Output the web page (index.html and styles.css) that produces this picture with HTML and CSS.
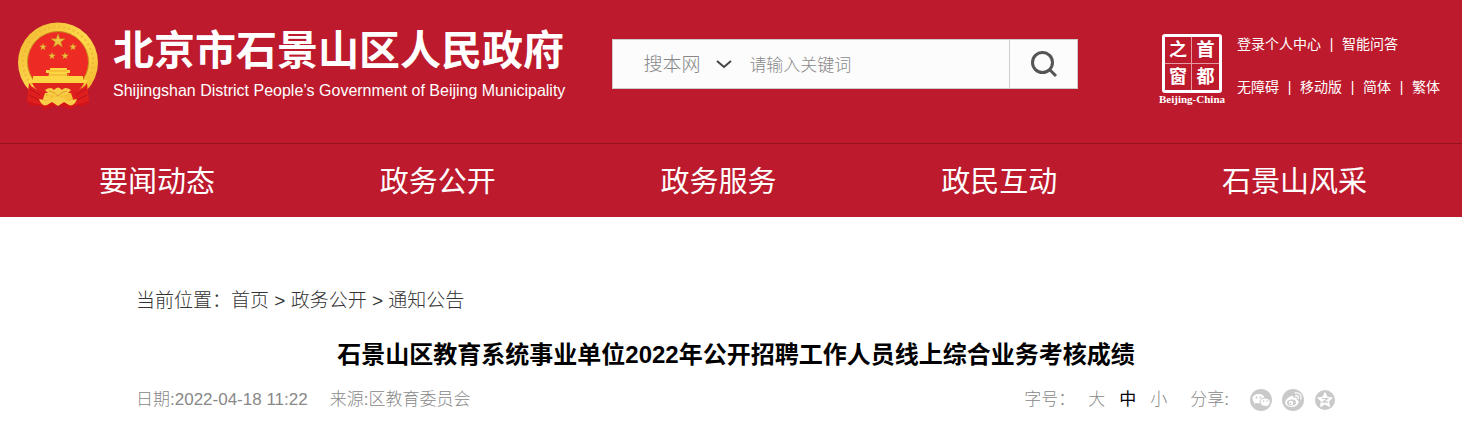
FILE: index.html
```html
<!DOCTYPE html>
<html lang="zh-CN">
  <head>
    <meta charset="utf-8" />
    <title>石景山区教育系统事业单位2022年公开招聘工作人员线上综合业务考核成绩</title>
    <meta name="viewport" content="width=device-width, initial-scale=1" />
    <link rel="stylesheet" href="styles.css">
  </head>
  <body>
    <header class="header">
      <div class="top">
        <a class="logo" href="#">
          <svg class="emblem" viewBox="0 0 82 88" aria-hidden="true">
            <defs>
              <linearGradient id="gold" x1="0" y1="0" x2="1" y2="1">
                <stop offset="0" stop-color="#eeb62c" />
                <stop offset=".5" stop-color="#ffd84e" />
                <stop offset="1" stop-color="#f0b127" />
              </linearGradient>
              <path id="star" d="M0-10 2.3-3.1H9.5L3.7 1.2 5.9 8.1 0 3.9-5.9 8.1-3.7 1.2-9.5-3.1H-2.3Z" />
            </defs>
            <path d="M12 60 10 80Q15 86 22 83L28 87 41 83 54 87 60 83Q67 86 72 80L70 60Z" fill="#d31519" />
            <circle cx="41" cy="40.500" r="40" fill="url(#gold)" />
            <circle cx="41" cy="40" r="35" fill="none" stroke="#eeb833" stroke-width="2" stroke-dasharray="2 3" />
            <circle cx="41" cy="40" r="30.500" fill="#ee2a24" stroke="#c9881c" />
            <g fill="#eec33d" stroke="#b9831c" stroke-width=".6">
              <use href="#star" transform="translate(41 19) scale(.75)" />
              <use href="#star" transform="translate(26 25) scale(.38)" />
              <use href="#star" transform="translate(56 25) scale(.38)" />
              <use href="#star" transform="translate(35 34) scale(.38)" />
              <use href="#star" transform="translate(48 34) scale(.38)" />
            </g>
            <path d="M33 46H50V48H53V51H50V54H66V58H71Q69 63 66 61H16Q13 62 11 58H16V54H32V51H29V48H33Z" fill="#ffd543" />
            <path d="M32 49H50M31 53H52" stroke="#e9ab2c" />
            <path d="M15 61H67Q64 68 57 71H25Q18 68 15 61Z" fill="#df241f" />
            <path d="M12 61Q14 66 28 71L24 83 10 79ZM70 61Q68 66 54 71L58 83 72 79Z" fill="#df1f1e" />
            <path d="M13 67 23 73M12 73 22 78M69 67 59 73M70 73 60 78" stroke="#b5131a" />
            <path d="M28 68Q34 64 37 68 41 63 45 68 48 64 54 68 49 74 44 72L41 75 38 72Q33 74 28 68ZM22 77 33 79Q38 74 41 75 45 74 49 79L60 77Q57 85 52 83L47 80 41 84 35 80 30 83Q25 85 22 77Z" fill="#f8ce49" />
            <path d="M32 69Q38 70 41 74 44 70 50 69" fill="none" stroke="#dd9c28" />
          </svg>
          <span class="logo-text">
            <span class="logo-cn">北京市石景山区人民政府</span>
            <span class="logo-en" lang="en">Shijingshan District People’s Government of Beijing Municipality</span>
          </span>
        </a>
        <form class="search" role="search">
          <div class="scope">
            <select aria-label="搜索范围">
              <option>搜本网</option>
            </select>
            <svg width="16" height="10" viewBox="0 0 16 10" aria-hidden="true">
              <path d="M1 2 8 8 15 2" />
            </svg>
          </div>
          <input type="text" placeholder="请输入关键词" aria-label="请输入关键词" />
          <button type="button" aria-label="搜索">
            <svg width="28" height="28" viewBox="0 0 28 28" aria-hidden="true">
              <circle cx="12.500" cy="12.500" r="10" />
              <path d="M19.500 19.500 26 26" />
            </svg>
          </button>
        </form>
        <div class="side">
          <a class="capital" href="#">
            <span class="seal">
              <span>之</span><span>首</span>
              <span>窗</span><span>都</span>
            </span>
            <span class="seal-en">Beijing-China</span>
          </a>
          <div class="links">
            <p><a href="#">登录个人中心</a><i>|</i><a href="#">智能问答</a></p>
            <p><a href="#">无障碍</a><i>|</i><a href="#">移动版</a><i>|</i><a href="#">简体</a><i>|</i><a href="#">繁体</a></p>
          </div>
        </div>
      </div>
      <nav class="nav">
        <a href="#">要闻动态</a>
        <a href="#">政务公开</a>
        <a href="#">政务服务</a>
        <a href="#">政民互动</a>
        <a href="#">石景山风采</a>
      </nav>
    </header>
    <main class="main">
      <div class="crumbs">当前位置：<a href="#">首页</a> &gt; <a href="#">政务公开</a> &gt; <a href="#">通知公告</a></div>
      <h1>石景山区教育系统事业单位2022年公开招聘工作人员线上综合业务考核成绩</h1>
      <div class="meta">
        <span class="date">日期:2022-04-18 11:22</span>
        <span>来源:区教育委员会</span>
        <div class="tools">
          <span>字号：</span>
          <div class="sizes">
            <button type="button">大</button>
            <button type="button" class="on">中</button>
            <button type="button">小</button>
          </div>
          <span>分享:</span>
          <div class="share">
            <a href="#" aria-label="微信">
              <svg viewBox="0 0 22 22">
                <circle cx="11" cy="11" r="11" fill="#c9c9c9" />
                <path d="M8.500 5C5 5 2.500 7 2.500 9.700c0 1.500.8 2.800 2 3.600l-.5 1.900 2.200-1.100 2.300.3c3.500 0 6-2 6-4.700S12 5 8.500 5Z" fill="#fff" />
                <path d="M15 9c-3 0-5 1.800-5 4.200s2.200 4.200 5 4.200l1.800-.2 2 1-.5-1.700c1.200-.8 1.900-1.900 1.900-3.300C20.200 10.800 18 9 15 9Z" fill="#fff" stroke="#c9c9c9" />
                <g fill="#c9c9c9"><circle cx="6.500" cy="8.500" r="1" /><circle cx="10.500" cy="8.500" r="1" /><circle cx="13.500" cy="12" r=".8" /><circle cx="17" cy="12" r=".8" /></g>
              </svg>
            </a>
            <a href="#" aria-label="微博">
              <svg viewBox="0 0 22 22">
                <circle cx="11" cy="11" r="11" fill="#c9c9c9" />
                <path d="M9 7c1.500-.6 2.800 0 2.300 1.900 2.500-.9 4.200 0 3.500 1.800 1.600.5 2.100 1.500 1.800 2.800-.5 2.600-3.500 4.500-7 4.500s-6.400-1.800-6.400-4.300C3.200 11.300 6.200 8 9 7Z" fill="#fff" />
                <ellipse cx="9.500" cy="13.700" rx="4.500" ry="3.200" fill="#c9c9c9" transform="rotate(-8 9.500 13.700)" />
                <circle cx="9" cy="14" r="2.300" fill="#fff" />
                <circle cx="8.500" cy="14.300" r=".9" fill="#c9c9c9" />
                <path d="M13.500 6.800c2-.3 3.200 1 2.700 2.900M13.300 4c3.900-.6 6.500 2.300 5.600 6" fill="none" stroke="#fff" stroke-width="1.300" stroke-linecap="round" />
              </svg>
            </a>
            <a href="#" aria-label="QQ空间">
              <svg viewBox="0 0 22 22">
                <circle cx="11" cy="11" r="10" fill="#c9c9c9" />
                <path d="m11 3.500 2.200 4.700 5.100.7-3.700 3.500.9 5.100L11 15l-4.500 2.500.9-5.100-3.700-3.500 5.100-.7Z" fill="#fff" stroke="#fff" stroke-linejoin="round" />
                <path d="M8 9.500h5.500L9 13.200h5" fill="none" stroke="#c9c9c9" stroke-width="1.200" />
              </svg>
            </a>
          </div>
        </div>
      </div>
    </main>
  </body>
</html>
```
FILE: styles.css
```css
* {
  box-sizing: border-box;
}
body {
  margin: 0;
  background: #fff;
  font-family: "Liberation Sans", "Noto Sans CJK SC", sans-serif;
  font-weight: 300;
}
a {
  color: inherit;
  text-decoration: none;
}
button,
input,
select {
  font: inherit;
  border: 0;
  padding: 0;
  background: none;
}
.header {
  background: #bd1a2d;
  color: #fff;
}
.top {
  display: flex;
  align-items: flex-start;
  padding: 22px 22px 0 17px;
  height: 143px;
}
.logo {
  display: flex;
  gap: 14px;
}
.emblem {
  width: 82px;
  height: 88px;
}
.logo-text {
  display: flex;
  flex-direction: column;
  white-space: nowrap;
}
.logo-cn {
  font-size: 41px;
  line-height: 58px;
  font-weight: 700;
}
.logo-en {
  font-size: 16px;
  line-height: 22px;
}
.search {
  display: flex;
  width: 466px;
  height: 50px;
  margin: 17px 0 0 47px;
  border: 1px solid #ccc;
  background: #fcfcfc;
}
.scope {
  display: flex;
  align-items: center;
  gap: 15px;
  padding-left: 30px;
}
.scope select {
  appearance: none;
  width: 58px;
  color: #888;
  font-size: 19px;
}
.scope path {
  fill: none;
  stroke: #444;
  stroke-width: 2;
}
.search input {
  flex: 1;
  min-width: 0;
  margin-left: 17px;
  padding-top: 3px;
  font-size: 17px;
  outline: 0;
}
.search input::placeholder {
  color: #888;
}
.search button {
  width: 68px;
  border-left: 1px solid #ccc;
  display: flex;
  align-items: center;
  justify-content: center;
}
.search button svg {
  fill: none;
  stroke: #555;
  stroke-width: 3;
}
.side {
  display: flex;
  gap: 12px;
  margin-left: auto;
}
.capital {
  display: flex;
  flex-direction: column;
  align-items: center;
  padding-top: 12px;
}
.seal {
  display: grid;
  grid-template-columns: 1fr 1fr;
  width: 60px;
  border: 3px solid #fff;
  border-radius: 3px;
  font-family: "Liberation Sans", "Noto Sans CJK SC", sans-serif;
  font-size: 18px;
  font-weight: 700;
  line-height: 26px;
  text-align: center;
}
.seal span:nth-child(odd) {
  border-right: 1px solid #e39aa3;
}
.seal span:nth-child(-n + 2) {
  border-bottom: 1px solid #e39aa3;
}
.seal-en {
  font: bold 11px/12px "Liberation Serif", serif;
}
.links {
  padding-top: 12px;
  font-size: 14px;
  font-weight: 400;
  line-height: 20px;
  white-space: nowrap;
}
.links p {
  margin: 0 0 23px;
}
.links i {
  display: inline-block;
  width: 21px;
  font-style: normal;
  text-align: center;
}
.nav {
  display: flex;
  justify-content: space-between;
  padding: 3px 95px 0 99px;
  border-top: 1px solid #97101f;
  font-size: 29px;
  font-weight: 400;
  line-height: 70px;
}
.main {
  padding: 70px 126px 0 136px;
}
.crumbs {
  color: #333;
  font-size: 19px;
  line-height: 28px;
}
h1 {
  margin: 22px 0 0;
  font-size: 24px;
  line-height: 36px;
  text-align: center;
}
.meta {
  display: flex;
  align-items: center;
  margin-top: 15px;
  color: #888;
  font-size: 17px;
  line-height: 24px;
}
.date {
  margin-right: 22px;
}
.tools {
  display: flex;
  align-items: center;
  margin-left: auto;
}
.sizes {
  display: flex;
  gap: 14px;
  margin: 0 23px 0 13px;
}
.sizes button {
  color: #888;
}
.sizes .on {
  color: #000;
  font-weight: 400;
}
.share {
  display: flex;
  gap: 10px;
  margin-left: 21px;
}
.share svg {
  display: block;
  width: 22px;
  height: 22px;
}
```
